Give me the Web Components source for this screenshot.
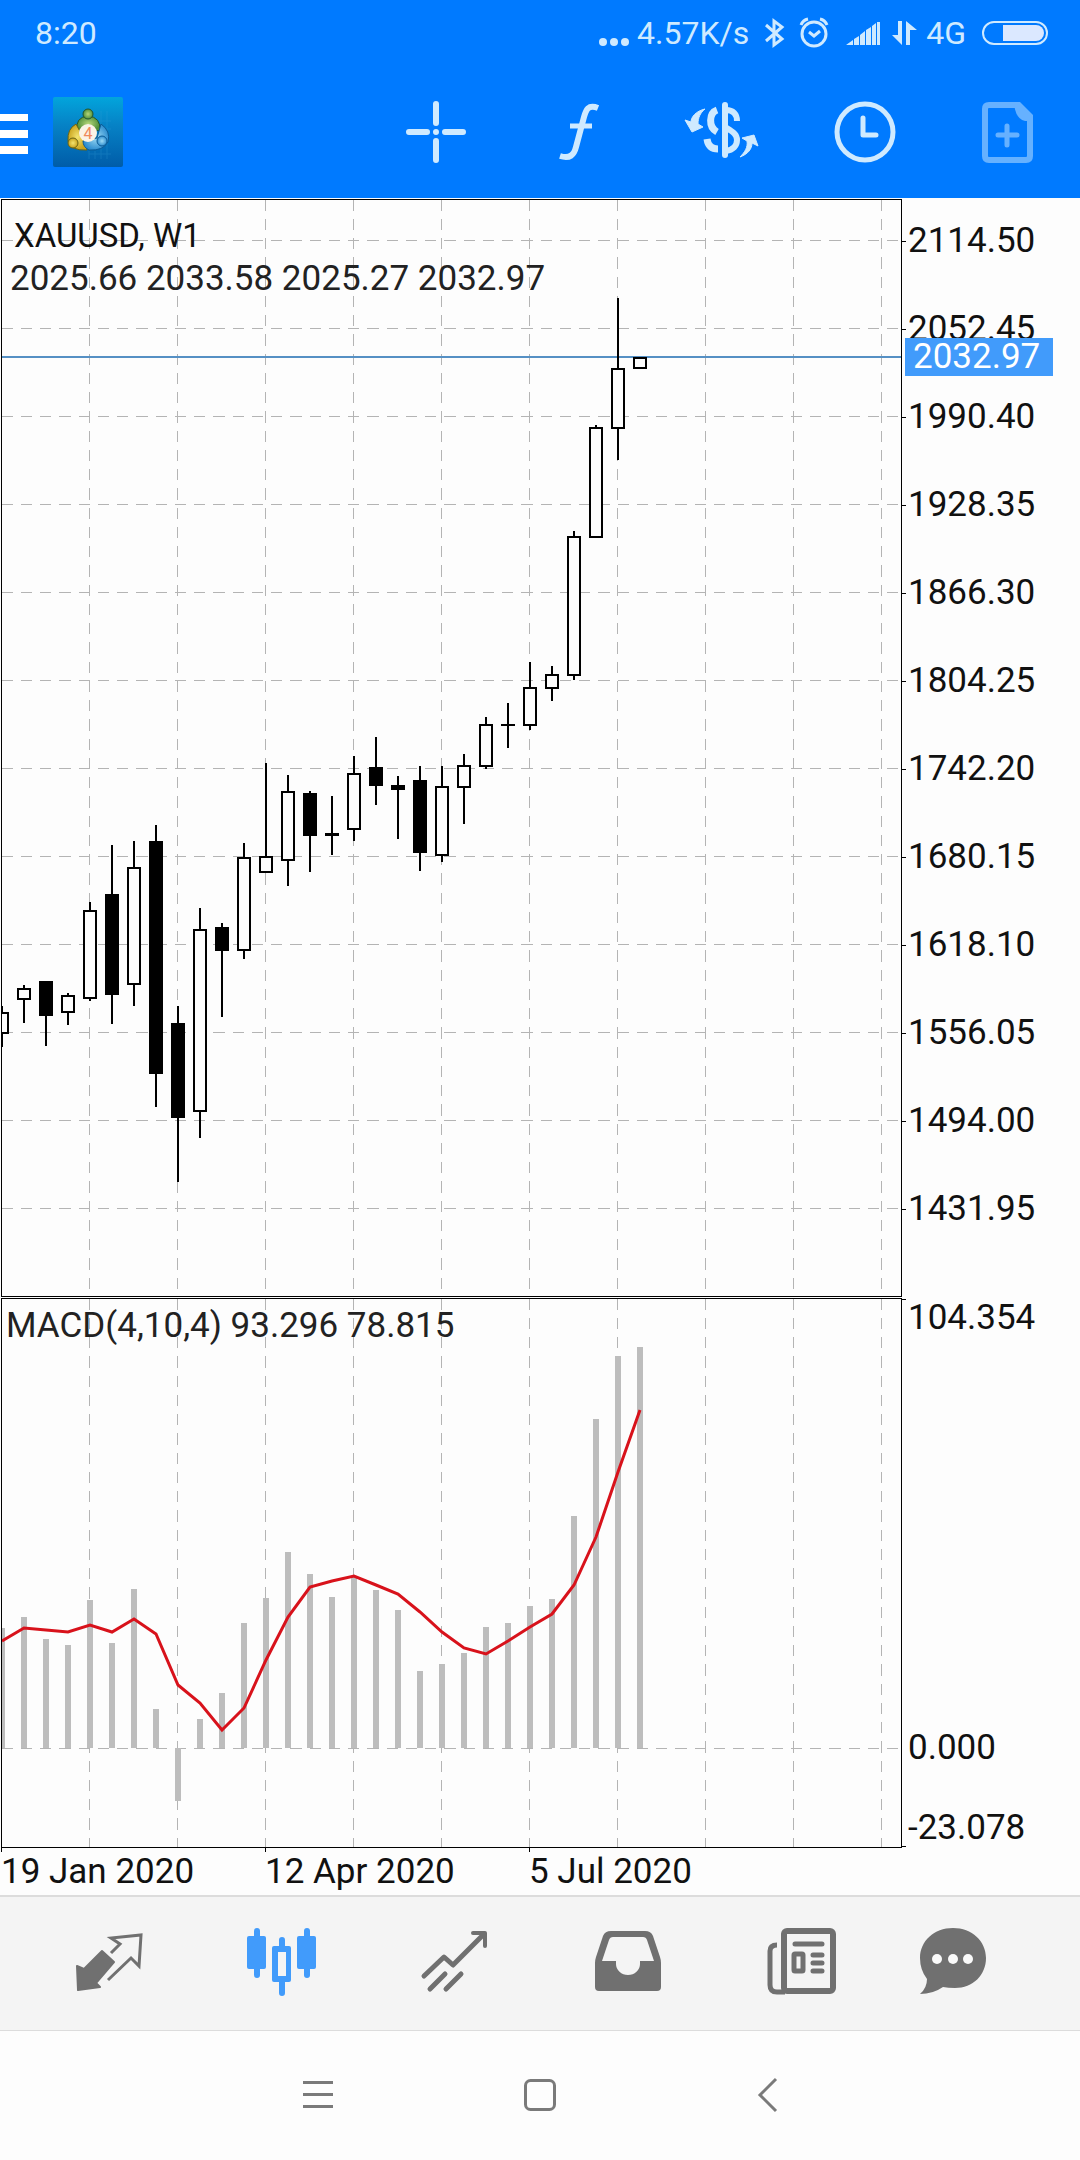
<!DOCTYPE html>
<html lang="en">
<head>
<meta charset="utf-8">
<meta name="viewport" content="width=device-width, initial-scale=1">
<title>XAUUSD, W1</title>
<style>
    body {
        margin: 0;
        background: #fdfdfd;
        color: #111;
        font-family: Roboto, "Liberation Sans", sans-serif;
        --header: #007aff;
        --headerText: #cfeaff;
        --accent: #419bfb;
        --tab: #707070;
    }
</style>
</head>
<body>
<status-bar></status-bar>
<app-bar></app-bar>
<price-chart></price-chart>
<tab-bar></tab-bar>
<system-nav></system-nav>

<script>
// Shared helper, every element clones its own template
function attach(element, template) {
    element.attachShadow({mode: 'open'}).appendChild(template.content.cloneNode(true));
}

/* ---------- icon-button ---------- */

const iconButtonTemplate = document.createElement('template');

iconButtonTemplate.innerHTML = `
    <style>
        :host {
            display: block;
        }

        button {
            display: flex;
            align-items: center;
            justify-content: center;
            width: 100%;
            height: 100%;
            margin: 0;
            padding: 0;
            border: none;
            background: none;
            color: inherit;
            cursor: pointer;
        }

        ::slotted(svg) {
            display: block;
            flex: none;
        }
    </style>
    <button type="button"><slot></slot></button>
`

class IconButton extends HTMLElement {
    constructor() {
        super();
        attach(this, iconButtonTemplate);
    }

    static get observedAttributes() { return ["label"]; }

    attributeChangedCallback() {
        this.shadowRoot.querySelector('button').setAttribute('aria-label', this.getAttribute('label'));
    }
}

customElements.define('icon-button', IconButton);

/* ---------- status-bar ---------- */

const statusBarTemplate = document.createElement('template');

statusBarTemplate.innerHTML = `
    <style>
        :host {
            display: flex;
            align-items: center;
            gap: 8px;
            box-sizing: border-box;
            height: 66px;
            padding: 0 31px 0 35px;
            background: var(--header);
            color: var(--headerText);
            font-size: 32px;
            line-height: 40px;
        }

        .time {
            margin-right: auto;
        }

        svg {
            display: block;
        }
    </style>
    <span class="time">8:20</span>
    <svg width="32" height="32" viewBox="0 0 32 32" fill="currentColor">
        <circle cx="6" cy="25" r="4"/><circle cx="17" cy="25" r="4"/><circle cx="28" cy="25" r="4"/>
    </svg>
    <span>4.57K/s</span>
    <svg width="34" height="32" viewBox="0 0 34 32" fill="none" stroke="currentColor" stroke-width="3">
        <path d="M9 8L25 22L17 28V4L25 10L9 24"/>
    </svg>
    <svg width="34" height="32" viewBox="0 0 34 32" fill="none" stroke="currentColor" stroke-width="3">
        <circle cx="15" cy="17" r="12"/>
        <path d="M10 15L15 19L21 14M2 8Q4 3 9 2M28 8Q26 3 21 2"/>
    </svg>
    <svg width="41" height="32" viewBox="0 0 41 32" fill="currentColor">
        <path d="M5 28L12 23V28ZM13 22L18 19V28H13ZM19 18L24 14V28H19ZM25 13L30 10V28H25ZM31 9L35 6V28H31ZM36 5H39V28H36Z"/>
    </svg>
    <svg width="28" height="32" viewBox="0 0 28 32" fill="currentColor">
        <path d="M8 4H12V28L2 18H8ZM16 28H20V13H27L16 4Z"/>
    </svg>
    <span>4G</span>
    <svg width="75" height="32" viewBox="0 0 75 32">
        <rect x="9" y="5" width="64" height="22" rx="11" fill="none" stroke="currentColor" stroke-width="2"/>
        <path d="M29 8H62A8 8 0 0 1 62 24H29Z" fill="#dbe8ff"/>
    </svg>
`

class StatusBar extends HTMLElement {
    constructor() {
        super();
        attach(this, statusBarTemplate);
    }
}

customElements.define('status-bar', StatusBar);

/* ---------- app-bar ---------- */

const appBarTemplate = document.createElement('template');

appBarTemplate.innerHTML = `
    <style>
        :host {
            display: flex;
            align-items: stretch;
            box-sizing: border-box;
            height: 132px;
            background: var(--header);
            color: var(--headerText);
        }

        .menu {
            width: 28px;
            color: white;
        }

        .logo {
            align-self: center;
            margin-left: 25px;
        }

        nav {
            display: flex;
            margin-left: auto;
        }

        nav icon-button {
            width: 143px;
        }

        .disabled {
            color: #66b1ff;
        }
    </style>
    <icon-button class="menu" label="Menu">
        <svg width="28" height="72" viewBox="0 0 28 72" fill="currentColor">
            <path d="M0 18H28V25H0ZM0 34H28V42H0ZM0 50H28V58H0Z"/>
        </svg>
    </icon-button>
    <svg class="logo" width="70" height="70" viewBox="0 0 70 70">
        <defs>
            <linearGradient id="sea" x1="0" y1="0" x2="0" y2="1">
                <stop offset="0" stop-color="#02a5dc"/>
                <stop offset=".4" stop-color="#0682c6"/>
                <stop offset="1" stop-color="#005ca8"/>
            </linearGradient>
            <radialGradient id="green"><stop offset="0" stop-color="#b5d67a"/><stop offset="1" stop-color="#4f8f3a"/></radialGradient>
            <radialGradient id="gold"><stop offset="0" stop-color="#f3e470"/><stop offset="1" stop-color="#c9a21c"/></radialGradient>
            <radialGradient id="blue"><stop offset="0" stop-color="#9fdcf5"/><stop offset="1" stop-color="#2f8ed0"/></radialGradient>
        </defs>
        <rect width="70" height="70" rx="2" fill="url(#sea)"/>
        <path d="M36 54V62M42 54V62M48 14V62M54 14V62M36 57H58M46 24H58M54 32H58" stroke="#3ba4da" stroke-width="1" opacity=".25"/>
        <g stroke="#23552f" stroke-width="1">
            <path d="M24 34Q22 20 35 19Q48 20 47 34L36 32Z" fill="url(#green)"/>
            <path d="M23 27Q14 32 15 44Q18 54 34 53L30 40Z" fill="url(#gold)" stroke="#6a6415"/>
            <path d="M48 27Q58 34 55 45Q50 54 36 53Q30 50 30 44L44 41Z" fill="url(#blue)" stroke="#0c5b95"/>
            <circle cx="35" cy="17" r="5" fill="url(#green)"/>
            <circle cx="20" cy="46" r="5" fill="url(#gold)" stroke="#6a6415"/>
            <circle cx="49" cy="44" r="5" fill="url(#blue)" stroke="#0c5b95"/>
        </g>
        <circle cx="35" cy="36" r="9" fill="#fbf3e6"/>
        <text x="35" y="42" text-anchor="middle" font-size="16" fill="#f08a5c">4</text>
    </svg>
    <nav>
        <icon-button label="Crosshair">
            <svg width="79" height="72" viewBox="0 0 79 72" stroke="currentColor" stroke-width="6" stroke-linecap="round">
                <path d="M12 36H30M48 36H66M39 8V27M39 45V64M39 36V36"/>
            </svg>
        </icon-button>
        <icon-button label="Indicators">
            <svg width="79" height="72" viewBox="0 0 79 72" fill="none" stroke="currentColor" stroke-width="6">
                <path d="M58 12C48 8 46 14 44 21L36 51C34 59 30 63 20 60"/>
                <path d="M30 30H52" stroke-width="5"/>
            </svg>
        </icon-button>
        <icon-button label="Symbols">
            <svg width="79" height="72" viewBox="0 0 79 72" fill="none" stroke="currentColor" stroke-width="6">
                <path d="M42 9V59" stroke-linecap="round"/>
                <path d="M34 14C26 17 25 31 34 36M24 43C25 50 29 53 35 53" stroke-width="7"/>
                <path d="M43 14C50 14 54 18 54 25M42 31C50 36 54 38 54 44C54 50 50 54 43 55"/>
                <path d="M22 13C13 15 8 21 8 26L2 24L9 36L20 31L15 28C15 22 17 17 22 13ZM57 61C65 58 69 53 69 47L75 50L71 39L59 42L64 45C65 51 62 56 57 61Z" fill="currentColor" stroke="currentColor" stroke-width="1"/>
            </svg>
        </icon-button>
        <icon-button label="Timeframes">
            <svg width="79" height="72" viewBox="0 0 79 72" fill="none" stroke="currentColor" stroke-width="5">
                <circle cx="39" cy="36" r="28"/>
                <path d="M37 22V39H50" stroke-linecap="round" stroke-linejoin="round"/>
            </svg>
        </icon-button>
        <icon-button class="disabled" label="New order">
            <svg width="79" height="72" viewBox="0 0 79 72" fill="none" stroke="currentColor" stroke-width="6">
                <path d="M50 9H20Q16 9 16 13V60Q16 64 20 64H57Q61 64 61 60V21"/>
                <path d="M45 6H51L64 19V25H56Q46 23 45 6Z" fill="currentColor" stroke="none"/>
                <path d="M38 30V49M29 39H48" stroke-width="5" stroke-linecap="round"/>
            </svg>
        </icon-button>
    </nav>
`

class AppBar extends HTMLElement {
    constructor() {
        super();
        attach(this, appBarTemplate);
    }
}

customElements.define('app-bar', AppBar);

/* ---------- chart-plot ---------- */

const STEP = 22;

// high, body top, body bottom, low, 1 for a falling week
const candles = [
    [806, 812, 834, 847, 0],
    [785, 788, 800, 823, 0],
    [781, 781, 816, 846, 1],
    [793, 795, 813, 825, 0],
    [702, 710, 799, 801, 0],
    [645, 694, 795, 824, 1],
    [641, 667, 785, 806, 0],
    [625, 641, 874, 907, 1],
    [806, 823, 918, 982, 1],
    [708, 729, 912, 938, 0],
    [723, 727, 751, 817, 1],
    [643, 657, 751, 759, 0],
    [563, 656, 673, 673, 0],
    [575, 591, 661, 686, 0],
    [591, 593, 636, 672, 1],
    [596, 633, 636, 655, 1],
    [556, 573, 630, 641, 0],
    [537, 567, 586, 605, 1],
    [576, 585, 590, 639, 1],
    [566, 580, 653, 671, 1],
    [566, 586, 656, 662, 0],
    [554, 565, 588, 624, 0],
    [517, 524, 567, 569, 0],
    [503, 524, 526, 548, 1],
    [462, 487, 526, 530, 0],
    [466, 474, 489, 501, 0],
    [331, 336, 476, 480, 0],
    [225, 227, 338, 338, 0],
    [98, 168, 229, 260, 0],
    [157, 157, 169, 169, 0]
];

const ZERO = 449;
const bars = [329, 318, 340, 346, 301, 344, 290, 410, 502, 420, 394, 324, 299, 253, 275, 298, 278, 291, 311, 372, 365, 354, 328, 324, 307, 300, 217, 120, 57, 48];
const signal = [342, 329, 331, 333, 326, 333, 320, 335, 386, 404, 431, 409, 361, 318, 288, 282, 277, 286, 295, 313, 333, 349, 355, 342, 328, 315, 286, 238, 173, 111];

const plotTemplate = document.createElement('template');

plotTemplate.innerHTML = `
    <style>
        :host {
            position: relative;
            display: block;
            box-sizing: border-box;
            border: 1px solid #000;
            overflow: hidden;
        }

        svg {
            display: block;
            width: 100%;
            height: 100%;
        }

        .caption {
            position: absolute;
            top: 0;
            left: 0;
        }

        .grid {
            stroke: #b4b4b4;
            stroke-dasharray: 11 8 11 8 11 8 12 8;
            shape-rendering: crispEdges;
        }
    </style>
    <svg><g class="grid"></g><g class="series"></g></svg>
    <div class="caption"><slot></slot></div>
`

class ChartPlot extends HTMLElement {
    constructor() {
        super();
        attach(this, plotTemplate);
    }

    connectedCallback() {
        let lines = '';
        for (let x = 87; x < 2000; x += STEP * 4) {
            lines += `<line x1="${x + .5}" y1="0" x2="${x + .5}" y2="100%"/>`;
        }
        const rows = this.getAttribute('rows').split(' ').map(Number);
        rows.forEach(y => lines += `<line x1="0" y1="${y + .5}" x2="100%" y2="${y + .5}"/>`);

        this.shadowRoot.querySelector('.grid').innerHTML = lines;
        this.shadowRoot.querySelector('.series').innerHTML =
            this.getAttribute('type') === 'macd' ? this.macd() : this.candles();
    }

    candles() {
        const shapes = candles.map(([high, top, bottom, low, down], i) => {
            const x = i * STEP;
            const body = down
                ? `<rect x="${x - 7}" y="${top}" width="14" height="${bottom - top}"/>`
                : `<rect x="${x - 6}" y="${top + 1}" width="12" height="${bottom - top - 2}" fill="#fdfdfd" stroke="#000" stroke-width="2"/>`;
            return `<rect x="${x - 1}" y="${high}" width="2" height="${low - high}"/>${body}`;
        });
        return '<line x1="0" y1="157" x2="100%" y2="157" stroke="#5590c4" stroke-width="2"/>' + shapes.join('');
    }

    macd() {
        const columns = bars.map((y, i) =>
            `<rect x="${i * STEP - 3}" y="${Math.min(y, ZERO)}" width="6" height="${Math.abs(ZERO - y)}" fill="#bdbdbd"/>`);
        const points = signal.map((y, i) => `${i * STEP},${y}`).join(' ');
        return columns.join('') + `<polyline points="${points}" fill="none" stroke="#d8121b" stroke-width="3"/>`;
    }
}

customElements.define('chart-plot', ChartPlot);

/* ---------- axis-label ---------- */

const axisLabelTemplate = document.createElement('template');

axisLabelTemplate.innerHTML = `
    <style>
        :host {
            display: flex;
            align-items: center;
            gap: 2px;
            height: 40px;
            line-height: 40px;
        }

        :host([tick="top"]) i {
            align-self: flex-start;
        }

        :host([tick="bottom"]) i {
            align-self: flex-end;
        }

        i {
            width: 4px;
            height: 1px;
            margin: 1px 0;
            background: #000;
        }

        :host([tick="none"]) i {
            background: none;
        }
    </style>
    <i></i><slot></slot>
`

class AxisLabel extends HTMLElement {
    constructor() {
        super();
        attach(this, axisLabelTemplate);
    }
}

customElements.define('axis-label', AxisLabel);

/* ---------- price-chart ---------- */

const priceChartTemplate = document.createElement('template');

priceChartTemplate.innerHTML = `
    <style>
        :host {
            display: grid;
            grid-template-columns: 1fr 178px;
            row-gap: 1px;
            padding: 1px 0 3px 1px;
            font-size: 35px;
            line-height: 40px;
        }

        .main {
            height: 1098px;
        }

        .macd {
            height: 550px;
        }

        h1 {
            margin: 16px 0 3px 12px;
            font-size: 33px;
            font-weight: 400;
        }

        p {
            margin: 0 0 0 8px;
            color: #222;
        }

        .macd p {
            margin: 7px 0 0 4px;
        }

        .axis {
            position: relative;
            display: flex;
            flex-direction: column;
        }

        .prices {
            gap: 48px;
            padding-top: 22px;
        }

        .values {
            justify-content: flex-end;
            gap: 40px;
        }

        .values axis-label:first-child {
            margin-bottom: auto;
        }

        .current {
            position: absolute;
            top: 139px;
            left: 3px;
            box-sizing: border-box;
            width: 148px;
            height: 38px;
            padding-left: 8px;
            background: var(--accent);
            color: white;
            line-height: 38px;
        }

        .dates {
            display: flex;
            margin-top: -1px;
        }

        .dates span {
            width: 264px;
        }

        .dates span::before {
            content: "";
            display: block;
            width: 1px;
            height: 4px;
            background: #000;
        }
    </style>
    <chart-plot class="main" type="candles" rows="40 128 216 304 392 480 568 656 744 832 920 1008">
        <h1>XAUUSD, W1</h1>
        <p>2025.66 2033.58 2025.27 2032.97</p>
    </chart-plot>
    <div class="axis prices">
        <axis-label>2114.50</axis-label>
        <axis-label>2052.45</axis-label>
        <axis-label>1990.40</axis-label>
        <axis-label>1928.35</axis-label>
        <axis-label>1866.30</axis-label>
        <axis-label>1804.25</axis-label>
        <axis-label>1742.20</axis-label>
        <axis-label>1680.15</axis-label>
        <axis-label>1618.10</axis-label>
        <axis-label>1556.05</axis-label>
        <axis-label>1494.00</axis-label>
        <axis-label>1431.95</axis-label>
        <span class="current">2032.97</span>
    </div>
    <chart-plot class="macd" type="macd" rows="449">
        <p>MACD(4,10,4) 93.296 78.815</p>
    </chart-plot>
    <div class="axis values">
        <axis-label tick="top">104.354</axis-label>
        <axis-label tick="none">0.000</axis-label>
        <axis-label tick="bottom">-23.078</axis-label>
    </div>
    <div class="dates">
        <span>19 Jan 2020</span>
        <span>12 Apr 2020</span>
        <span>5 Jul 2020</span>
    </div>
`

class PriceChart extends HTMLElement {
    constructor() {
        super();
        attach(this, priceChartTemplate);
    }
}

customElements.define('price-chart', PriceChart);

/* ---------- tab-bar ---------- */

const tabBarTemplate = document.createElement('template');

tabBarTemplate.innerHTML = `
    <style>
        :host {
            display: flex;
            box-sizing: border-box;
            height: 136px;
            padding: 0 20px 0 22px;
            border-top: 2px solid #dcdcdc;
            border-bottom: 1px solid #dcdcdc;
            background: #f4f4f4;
            color: var(--tab);
        }

        icon-button {
            flex: 1;
        }

        .active {
            color: var(--accent);
        }
    </style>
    <icon-button label="Quotes">
        <svg width="115" height="81" viewBox="0 0 115 81" fill="none" stroke="currentColor" stroke-width="3">
            <path d="M26 43L33 46L51 28L63 39L45 60L49 64L27 67Z" fill="currentColor" stroke-width="2" stroke-linejoin="round"/>
            <path d="M60 30L69 21L60 15L90 12L88 43L80 35L57 57"/>
        </svg>
    </icon-button>
    <icon-button class="active" label="Chart">
        <svg width="115" height="81" viewBox="0 0 115 81" fill="currentColor">
            <rect x="23" y="13" width="19" height="33" rx="2"/><rect x="30" y="5" width="6" height="50" rx="3"/>
            <rect x="73" y="13" width="19" height="33" rx="2"/><rect x="80" y="5" width="6" height="50" rx="3"/>
            <path d="M50 23H55V17A3 3 0 0 1 61 17V23H65Q67 23 67 25V57Q67 59 65 59H61V70A3 3 0 0 1 55 70V59H50Q48 59 48 57V25Q48 23 50 23ZM54 29V53H62V29Z" fill-rule="evenodd"/>
        </svg>
    </icon-button>
    <icon-button label="Trade">
        <svg width="115" height="81" viewBox="0 0 115 81" fill="none" stroke="currentColor" stroke-width="5" stroke-linecap="round" stroke-linejoin="round">
            <path d="M27 53L47 34L56 42L87 11M48 51L33 66M64 51L49 66"/>
            <path d="M76 10H88V23" stroke-width="4"/>
        </svg>
    </icon-button>
    <icon-button label="History">
        <svg width="115" height="81" viewBox="0 0 115 81" fill="currentColor">
            <path d="M41 8H75Q81 8 83 13L90 34Q91 37 91 40V64Q91 68 87 68H29Q25 68 25 64V40Q25 37 26 34L33 13Q35 8 41 8ZM43 14Q40 14 39 17L32 38H46V41A12 11 0 0 0 70 41V38H84L77 17Q76 14 73 14Z" fill-rule="evenodd"/>
        </svg>
    </icon-button>
    <icon-button label="News">
        <svg width="115" height="81" viewBox="0 0 115 81" fill="none" stroke="currentColor" stroke-width="5" stroke-linecap="round">
            <rect x="41" y="8" width="49" height="60" rx="3" stroke-width="6"/>
            <path d="M34 22Q27 22 27 28V62Q27 69 34 69H42" stroke-linecap="butt"/>
            <path d="M52 21H79M70 32H79M70 40H79M70 48H79"/>
            <rect x="51" y="31" width="9" height="17" rx="1"/>
        </svg>
    </icon-button>
    <icon-button label="Messages">
        <svg width="115" height="81" viewBox="0 0 115 81" fill="currentColor">
            <path d="M37 5C56 5 70 18 70 35C70 52 57 65 39 65Q32 65 27 64Q17 71 4 71Q11 65 11 56Q4 47 4 35C4 18 18 5 37 5Z"/>
            <g fill="#fafafa"><circle cx="21" cy="36" r="5"/><circle cx="37" cy="36" r="5"/><circle cx="52" cy="36" r="5"/></g>
        </svg>
    </icon-button>
`

class TabBar extends HTMLElement {
    constructor() {
        super();
        attach(this, tabBarTemplate);
    }
}

customElements.define('tab-bar', TabBar);

/* ---------- system-nav ---------- */

const systemNavTemplate = document.createElement('template');

systemNavTemplate.innerHTML = `
    <style>
        :host {
            display: flex;
            justify-content: center;
            height: 129px;
            color: #7a7a7a;
        }

        icon-button {
            width: 224px;
        }
    </style>
    <icon-button label="Recent apps">
        <svg width="40" height="41" viewBox="0 0 40 41" stroke="currentColor" stroke-width="3">
            <path d="M7 7.5H37M7 19.5H37M7 31.5H37"/>
        </svg>
    </icon-button>
    <icon-button label="Home">
        <svg width="40" height="41" viewBox="0 0 40 41" fill="none" stroke="currentColor" stroke-width="3">
            <rect x="5.5" y="5.5" width="29" height="29" rx="5"/>
        </svg>
    </icon-button>
    <icon-button label="Back">
        <svg width="40" height="41" viewBox="0 0 40 41" fill="none" stroke="currentColor" stroke-width="3">
            <path d="M32 4L16 20L32 36"/>
        </svg>
    </icon-button>
`

class SystemNav extends HTMLElement {
    constructor() {
        super();
        attach(this, systemNavTemplate);
    }
}

customElements.define('system-nav', SystemNav);
</script>
</body>
</html>
